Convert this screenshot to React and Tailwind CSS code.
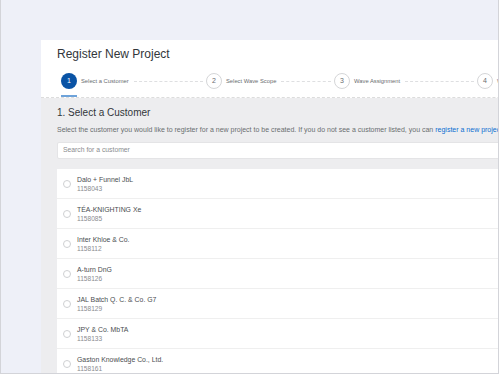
const customers = [
  { name: "Dalo + Funnel JbL", id: "1158043" },
  { name: "TÉA-KNIGHTING Xe", id: "1158085" },
  { name: "Inter Khloe & Co.", id: "1158112" },
  { name: "A-turn DnG", id: "1158126" },
  { name: "JAL Batch Q. C. & Co. G7", id: "1158129" },
  { name: "JPY & Co. MbTA", id: "1158133" },
  { name: "Gaston Knowledge Co., Ltd.", id: "1158161" },
];

const steps = [
  { n: 1, label: "Select a Customer", w: "w-[145px]" },
  { n: 2, label: "Select Wave Scope", w: "w-[128px]" },
  { n: 3, label: "Wave Assignment", w: "w-[143px]" },
  { n: 4, label: "Wave Review", w: "w-[120px]" },
];

const Step = ({ step, active, last }) => (
  <div className={`flex items-start shrink-0 ${step.w}`}>
    <div className="flex flex-col items-center">
      <div
        className={
          active
            ? "w-[16px] h-[16px] rounded-full bg-[#0a53a5] text-white text-[7px] flex items-center justify-center"
            : "w-[16px] h-[16px] rounded-full bg-white border border-[#d5d6d8] text-[#6a6d70] text-[7px] flex items-center justify-center"
        }
      >
        {step.n}
      </div>
      {active && <div className="mt-[6px] w-[16px] h-[2px] bg-[#6ea3da]" />}
    </div>
    <div className="h-[16px] flex items-center ml-[4px] text-[5.8px] text-[#6a6d70] whitespace-nowrap">
      {step.label}
    </div>
    {!last && (
      <div className="h-[16px] flex-1 flex items-center ml-[5px] mr-[3px]">
        <div className="w-full border-t border-dashed border-[#dedfe1]" />
      </div>
    )}
  </div>
);

export default function App() {
  return (
    <div className="w-[500px] h-[375px] bg-white overflow-hidden font-['Liberation_Sans',Arial,sans-serif]">
      <div className="w-[499px] h-[374px] border-l border-r border-b border-[#d3d4d9] bg-[#eef0f8] overflow-hidden pt-[40px] pl-[40px]">
        <div className="w-[620px] h-full bg-white flex flex-col">
          <div className="pt-[6px] pl-[16px] border-b border-dashed border-[#dcdcdc]">
            <h1 className="text-[12px] leading-[16px] text-[#32363a]">Register New Project</h1>
            <div className="mt-[11px] pl-[4px] flex">
              {steps.map((s, i) => (
                <Step key={s.n} step={s} active={i === 0} last={i === steps.length - 1} />
              ))}
            </div>
          </div>

          <div className="flex-1 bg-[#ededef] px-[16px] pt-[8px]">
            <h2 className="text-[10px] leading-[14px] text-[#32363a]">1. Select a Customer</h2>
            <p className="mt-[5px] text-[7px] leading-[10px] text-[#6a6d70] whitespace-nowrap">
              Select the customer you would like to register for a new project to be created. If you do not see a customer listed, you can{" "}
              <span className="text-[#0a6ed1]">register a new project</span>
            </p>
            <div className="mt-[7px] h-[17px] bg-white border border-[#e4e4e6] rounded-[2px] flex items-center pl-[5px] text-[6.8px] text-[#8a8c8f]">
              Search for a customer
            </div>
            <div className="mt-[10px] bg-white">
              {customers.map((c) => (
                <div key={c.id} className="h-[30px] flex items-center pl-[6px] border-b border-[#efefef]">
                  <div className="w-[8px] h-[8px] rounded-full border border-[#cfd0d2]" />
                  <div className="ml-[6px] flex flex-col">
                    <span className="text-[6.9px] leading-[9px] text-[#4a4d50]">{c.name}</span>
                    <span className="text-[6.6px] leading-[9px] text-[#8a8c8f]">{c.id}</span>
                  </div>
                </div>
              ))}
            </div>
          </div>
        </div>
      </div>
    </div>
  );
}
